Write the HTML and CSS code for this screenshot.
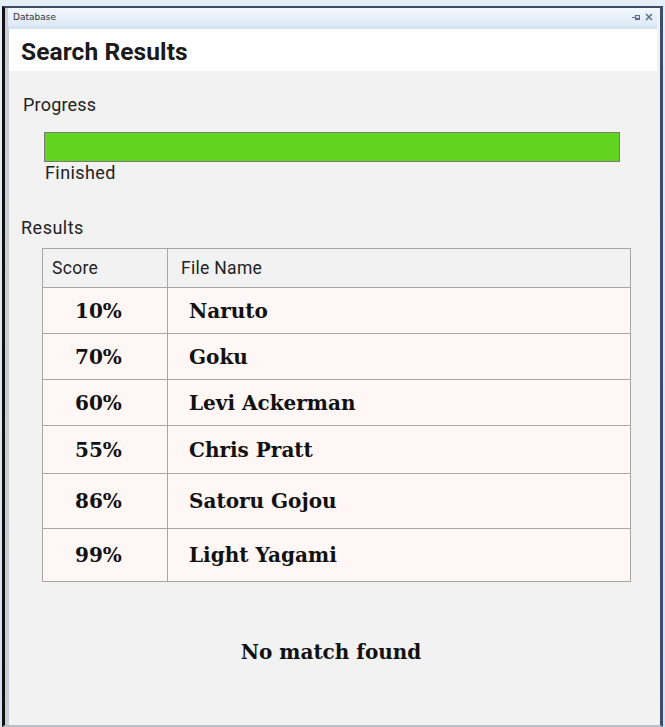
FILE: index.html
```html
<!DOCTYPE html>
<html>
<head>
<meta charset="utf-8">
<link rel="stylesheet" href="styles.css">
</head>
<body>
<div class="screen">
  <div class="window">
    <div class="titlebar">
      <span class="title">Database</span>
      <span class="controls">
        <svg width="9" height="7" viewBox="0 0 9 7"><rect x="0" y="3" width="3" height="1" fill="#5a6f86"/><rect x="3" y="1" width="5" height="5" fill="#5a6f86"/><rect x="4" y="2" width="3" height="2" fill="#cfe0f0"/></svg>
        <svg width="8" height="8" viewBox="0 0 8 8"><path d="M1 1 L7 7 M7 1 L1 7" stroke="#5a6f86" stroke-width="1.5"/></svg>
      </span>
    </div>
    <div class="header">
      <h1>Search Results</h1>
    </div>
    <div class="content">
      <div class="label progress-label">Progress</div>
      <div class="progress-wrap">
        <div class="bar"><div class="fill" style="width:100%"></div></div>
        <div class="status">Finished</div>
      </div>
      <div class="label results-label">Results</div>
      <table class="results">
        <thead>
          <tr><th class="c1">Score</th><th class="c2">File Name</th></tr>
        </thead>
        <tbody>
          <tr class="r1"><td class="c1">10%</td><td class="c2">Naruto</td></tr>
          <tr class="r2"><td class="c1">70%</td><td class="c2">Goku</td></tr>
          <tr class="r3"><td class="c1">60%</td><td class="c2">Levi Ackerman</td></tr>
          <tr class="r4"><td class="c1">55%</td><td class="c2">Chris Pratt</td></tr>
          <tr class="r5"><td class="c1">86%</td><td class="c2">Satoru Gojou</td></tr>
          <tr class="r6"><td class="c1">99%</td><td class="c2">Light Yagami</td></tr>
        </tbody>
      </table>
      <div class="nomatch">No match found</div>
    </div>
  </div>
</div>
</body>
</html>
```
FILE: styles.css
```css
html, body {
  margin: 0;
  padding: 0;
}
body {
  width: 665px;
  height: 727px;
  overflow: hidden;
  background: #dfe8f1;
}
.screen {
  height: 727px;
  box-sizing: border-box;
  padding: 6px 2px 0 2px;
  background: linear-gradient(#e6eef7, #d7e2ee);
}
.window {
  height: 721px;
  box-sizing: border-box;
  border-top: 2px solid #3b4c66;
  border-left: 3px solid #111;
  border-right: 3px solid #3c4d6b;
  border-bottom: 2px solid #b9bec6;
  background: #f2f2f2;
  display: flex;
  flex-direction: column;
  padding-left: 4px;
  padding-right: 3px;
  box-shadow: inset 4px 0 0 #c9ced6;
}
.titlebar {
  height: 18px;
  background: linear-gradient(#f3f8fd, #dce9f6);
  display: flex;
  align-items: center;
  justify-content: space-between;
  padding: 0 4px 0 5px;
  border-bottom: 3px solid #d3e3f3;
  margin-left: -1px;
}
.title {
  font-family: "DejaVu Sans", sans-serif;
  font-size: 9px;
  color: #333;
}
.controls {
  display: flex;
  gap: 4px;
  align-items: center;
}
.header {
  background: #ffffff;
  height: 42px;
  display: flex;
  align-items: center;
}
h1 {
  margin: 0;
  padding: 3px 0 0 12px;
  font-family: Roboto, "Liberation Sans", sans-serif;
  font-weight: 700;
  font-size: 24.5px;
  color: #1a1a1a;
  letter-spacing: 0.1px;
}
.content {
  flex: 1;
  background: #f2f2f2;
  display: flex;
  flex-direction: column;
}
.label {
  font-family: Roboto, "Liberation Sans", sans-serif;
  font-size: 18px;
  color: #222;
  letter-spacing: 0.2px;
}
.progress-label {
  margin: 23px 0 0 14px;
}
.progress-wrap {
  margin: 17px 0 0 35px;
  width: 576px;
}
.bar {
  height: 28px;
  border: 1px solid #7a7a7a;
  background: #e6e6e6;
}
.fill {
  height: 100%;
  background: #62d31e;
}
.status {
  font-family: Roboto, "Liberation Sans", sans-serif;
  font-size: 18px;
  letter-spacing: 0.4px;
  color: #222;
  padding-left: 1px;
}
.results-label {
  margin: 34px 0 0 12px;
  font-size: 18px;
  letter-spacing: 0.5px;
}
.results {
  margin: 10px 0 0 33px;
  width: 589px;
  border-collapse: collapse;
  table-layout: fixed;
  border: 1px solid #8a8a8a;
}
.results th, .results td {
  border: 1px solid #a6a6a6;
  padding: 0;
  text-align: left;
}
.results th {
  background: #f2f2f2;
  height: 38px;
  font-family: Roboto, "Liberation Sans", sans-serif;
  font-weight: 400;
  font-size: 17.5px;
  letter-spacing: 0.3px;
  color: #222;
}
.results th.c1 { padding-left: 9px; width: 115px; }
.results th.c2 { padding-left: 13px; }
.results td {
  background: #fff7f5;
  font-family: "DejaVu Serif", serif;
  font-weight: bold;
  font-size: 20px;
  color: #111;
}
.results td.c1 { padding-left: 32px; }
.results td.c2 { padding-left: 21px; }
.r1 td, .r2 td, .r3 td { height: 45px; }
.r4 td { height: 47px; }
.r5 td { height: 54px; }
.r6 td { height: 52px; }
.nomatch {
  margin-top: 58px;
  text-align: center;
  font-family: "DejaVu Serif", serif;
  font-weight: bold;
  font-size: 20px;
  color: #111;
  padding-right: 4px;
}
```
